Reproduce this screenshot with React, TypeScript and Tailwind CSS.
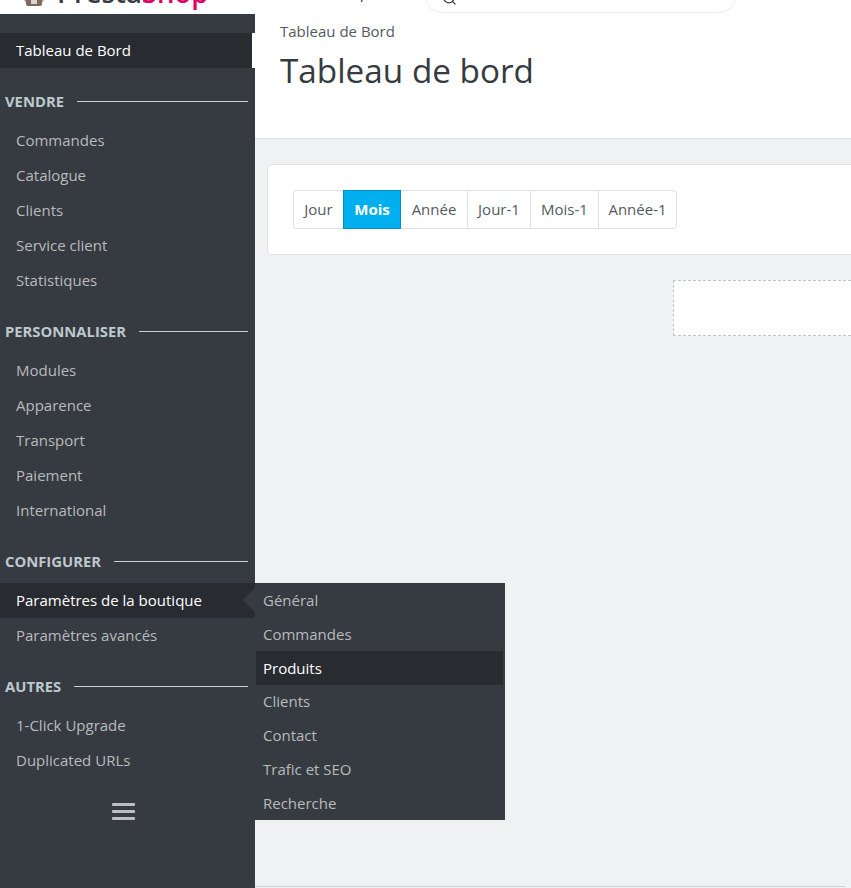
import { Search } from 'lucide-react'

const groups = [
  { title: 'VENDRE', items: ['Commandes', 'Catalogue', 'Clients', 'Service client', 'Statistiques'] },
  { title: 'PERSONNALISER', items: ['Modules', 'Apparence', 'Transport', 'Paiement', 'International'] },
  { title: 'CONFIGURER', items: ['Paramètres de la boutique', 'Paramètres avancés'] },
  { title: 'AUTRES', items: ['1-Click Upgrade', 'Duplicated URLs'] },
]

const submenu = ['Général', 'Commandes', 'Produits', 'Clients', 'Contact', 'Trafic et SEO', 'Recherche']

const periods = [
  { label: 'Jour', width: 'w-[49px]' },
  { label: 'Mois', width: 'w-[58px]' },
  { label: 'Année', width: 'w-[66px]' },
  { label: 'Jour-1', width: 'w-[63px]' },
  { label: 'Mois-1', width: 'w-[68px]' },
  { label: 'Année-1', width: 'w-[78px]' },
]

function Logo() {
  return (
    <div className="h-[14px] bg-white overflow-hidden relative">
      <svg className="absolute left-[22px] -top-[15px]" width="24" height="21" viewBox="0 0 24 21">
        <circle cx="12" cy="10" r="11" fill="#a8a29e" />
        <rect x="4" y="14" width="16" height="7" rx="2" fill="#7c6a5f" />
        <rect x="9" y="15" width="6" height="4" fill="#d9d4cf" />
      </svg>
      <div className="absolute left-[57px] -top-[25px] text-[27.5px] leading-[36px] font-semibold">
        <span className="text-[#363a41]">Presta</span>
        <span className="text-[#df0067]">Shop</span>
      </div>
    </div>
  )
}

function Sidebar() {
  return (
    <div className="w-[255px] shrink-0 flex flex-col h-[888px]">
      <Logo />
      <div className="flex-1 bg-[#363a41] pt-[19px]">
        <div className="h-[35px] bg-[#282b30] text-white text-[15px] flex items-center pl-4 relative">
          Tableau de Bord
          <div className="absolute right-0 top-0 bottom-0 w-[3px] bg-white" />
        </div>
        {groups.map((g) => (
          <div key={g.title}>
            <div className="h-[35px] mt-4 flex items-center pl-[5px] pr-[7px] gap-[13px]">
              <span className="text-[14.8px] font-bold text-[#bcc9ce]">{g.title}</span>
              <div className="flex-1 h-px bg-[#c9ced1]" />
            </div>
            <div className="mt-[4px]">
              {g.items.map((item) =>
                item === 'Paramètres de la boutique' ? (
                  <div key={item} className="h-[35px] bg-[#282b30] text-white text-[15px] flex items-center pl-4 relative">
                    {item}
                    <div className="absolute right-0 top-[5px] w-0 h-0 border-y-[12px] border-y-transparent border-r-[12px] border-r-[#363a41]" />
                  </div>
                ) : (
                  <div key={item} className="h-[35px] text-[#b8babc] text-[15px] flex items-center pl-4">
                    {item}
                  </div>
                ),
              )}
            </div>
          </div>
        ))}
        <div className="flex justify-center mt-[25px] ml-[-8px]">
          <div className="w-[23px] flex flex-col gap-[4px]">
            <div className="h-[3px] bg-[#bebebe] rounded-[1px]" />
            <div className="h-[3px] bg-[#bebebe] rounded-[1px]" />
            <div className="h-[3px] bg-[#bebebe] rounded-[1px]" />
          </div>
        </div>
      </div>
    </div>
  )
}

function Submenu() {
  return (
    <div className="absolute left-[255px] top-[583px] w-[250px] h-[237px] bg-[#363a41] pt-[0.5px] pr-[2px]">
      {submenu.map((item) => (
        <div
          key={item}
          className={
            'h-[33.75px] flex items-center pl-[7px] text-[15px] ml-px ' +
            (item === 'Produits' ? 'bg-[#282b30] text-white' : 'text-[#b8babc]')
          }
        >
          {item}
        </div>
      ))}
    </div>
  )
}

export default function App() {
  return (
    <div className="relative w-[851px] h-[888px] overflow-hidden flex bg-[#eff1f2] font-['Open_Sans',sans-serif]">
      <Sidebar />
      <div className="flex-1 min-w-0 flex flex-col">
        <div className="h-[139px] bg-white border-b border-[#dfe1e3] pl-[25px] relative">
          <div className="absolute left-[47px] -top-[18px] text-[15px] leading-[20px] text-[#363a41]">Accès rapide</div>
          <div className="absolute left-[170px] -top-[20px] w-[311px] h-[33px] border border-[#e8eaec] rounded-[17px] bg-white flex items-center pl-[16px]">
            <Search size={15} className="text-[#363a41] mt-[4px]" />
          </div>
          <div className="pt-[21px] text-[15px] leading-[20px] text-[#555a60]">Tableau de Bord</div>
          <h1 className="mt-[7px] text-[33.3px] leading-[45px] text-[#363a41]">Tableau de bord</h1>
        </div>
        <div className="pl-3 pt-[25px]">
          <div className="h-[91px] bg-white border border-[#dfe1e3] border-r-0 rounded-l-[5px] flex items-center pl-[25px]">
            <div className="flex h-[39px] border border-[#dfe1e3] rounded-[3px] text-[15px] text-[#555a60]">
              {periods.map((p, i) => (
                <div
                  key={p.label}
                  className={
                    'flex items-center justify-center ' +
                    p.width +
                    ' ' +
                    (p.label === 'Mois'
                      ? 'bg-[#00aff0] text-white font-bold border border-[#0a8fc4] -my-px'
                      : i > 2
                        ? 'border-l border-[#dfe1e3]'
                        : '')
                  }
                >
                  {p.label}
                </div>
              ))}
            </div>
          </div>
          <div className="mt-[25px] ml-[406px] h-[56px] bg-white border border-dashed border-[#c4c7c9] border-r-0" />
        </div>
        <div className="mt-auto mb-px mr-[6px] h-px bg-[#cfd1d3]" />
      </div>
      <Submenu />
    </div>
  )
}
